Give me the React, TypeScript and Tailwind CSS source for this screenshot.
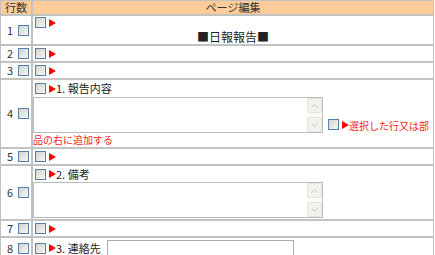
import React from 'react';

const font = "font-['Noto_Sans_CJK_JP','Noto_Sans',sans-serif]";

function Box({ className = '' }: { className?: string }) {
  return (
    <span
      className={`inline-block h-[11px] w-[11px] shrink-0 border border-[#5b7ea6] bg-gradient-to-br from-[#d2d2cf] to-[#f7f7f5] ${className}`}
    />
  );
}

function Tri({ className = '' }: { className?: string }) {
  return (
    <svg width="7" height="8" viewBox="0 0 7 8" className={`shrink-0 ${className}`}>
      <polygon points="0,0 7,4 0,8" fill="#ff0000" />
    </svg>
  );
}

function Lead({ label, h = 'h-[15px]' }: { label?: string; h?: string }) {
  return (
    <div className={`flex items-center ${h}`}>
      <Box className="ml-[2px]" />
      <Tri className="ml-[3px]" />
      {label ? <span className="text-[11px] leading-none text-[#222]">{label}</span> : null}
    </div>
  );
}

function Area() {
  return (
    <div className="flex h-[36px] w-[290px] shrink-0 border border-[#b7bcc1] bg-white">
      <div className="flex-1" />
      <div className="flex w-[15px] flex-col bg-[#fbfbf9]">
        <div className="flex h-[15px] items-center justify-center rounded-[2px] border border-[#e6e5de] bg-[#f3f2ec]">
          <svg width="7" height="4" viewBox="0 0 7 4">
            <polyline points="0.5,3.5 3.5,0.5 6.5,3.5" fill="none" stroke="#c4c4be" strokeWidth="1" />
          </svg>
        </div>
        <div className="flex-1" />
        <div className="flex h-[15px] items-center justify-center rounded-[2px] border border-[#e6e5de] bg-[#f3f2ec]">
          <svg width="7" height="4" viewBox="0 0 7 4">
            <polyline points="0.5,0.5 3.5,3.5 6.5,0.5" fill="none" stroke="#c4c4be" strokeWidth="1" />
          </svg>
        </div>
      </div>
    </div>
  );
}

function NumCell({ n, h }: { n: number; h: string }) {
  return (
    <div className={`flex items-center justify-end bg-white pr-[2px] ${h}`}>
      <span className="text-[11px] leading-none text-[#333]">{n}</span>
      <Box className="ml-[5px]" />
    </div>
  );
}

export default function App() {
  return (
    <div className={`h-[255px] w-[435px] overflow-hidden bg-white ${font}`}>
      <div className="grid w-[434px] grid-cols-[30px_1fr] gap-[2px] bg-[#c2c2c2] p-px">
        <div className="flex h-[13px] items-center justify-center bg-[#ffcc99] text-[11px] leading-none text-[#333]">行数</div>
        <div className="flex h-[13px] items-center justify-center bg-[#ffcc99] text-[11px] leading-none text-[#333]">ページ編集</div>

        <NumCell n={1} h="h-[28px]" />
        <div className="flex h-[28px] flex-col bg-white">
          <Lead h="h-[13px]" />
          <div className="h-[15px] text-center text-[12px] leading-[15px] text-[#222]">■日報報告■</div>
        </div>

        <NumCell n={2} h="h-[15px]" />
        <div className="bg-white"><Lead /></div>

        <NumCell n={3} h="h-[15px]" />
        <div className="bg-white"><Lead /></div>

        <NumCell n={4} h="h-[67px]" />
        <div className="flex h-[67px] flex-col bg-white">
          <Lead h="h-[17px]" label="1. 報告内容" />
          <div className="flex items-end">
            <Area />
            <Box className="mb-[3px] ml-[5px]" />
            <Tri className="mb-[4px] ml-[3px]" />
            <span className="mb-[2px] whitespace-nowrap text-[10px] leading-none text-[#ff1a1a]">選択した行又は部</span>
          </div>
          <div className="h-[14px] text-[10px] leading-[14px] text-[#ff1a1a]">品の右に追加する</div>
        </div>

        <NumCell n={5} h="h-[15px]" />
        <div className="bg-white"><Lead /></div>

        <NumCell n={6} h="h-[53px]" />
        <div className="flex h-[53px] flex-col bg-white">
          <Lead h="h-[16px]" label="2. 備考" />
          <Area />
        </div>

        <NumCell n={7} h="h-[15px]" />
        <div className="bg-white"><Lead /></div>

        <NumCell n={8} h="h-[20px]" />
        <div className="flex h-[20px] items-center bg-white">
          <Lead h="h-[20px]" label="3. 連絡先" />
          <div className="ml-[6px] h-[16px] w-[187px] border border-[#a9aeb3] bg-white" />
        </div>
      </div>
    </div>
  );
}
